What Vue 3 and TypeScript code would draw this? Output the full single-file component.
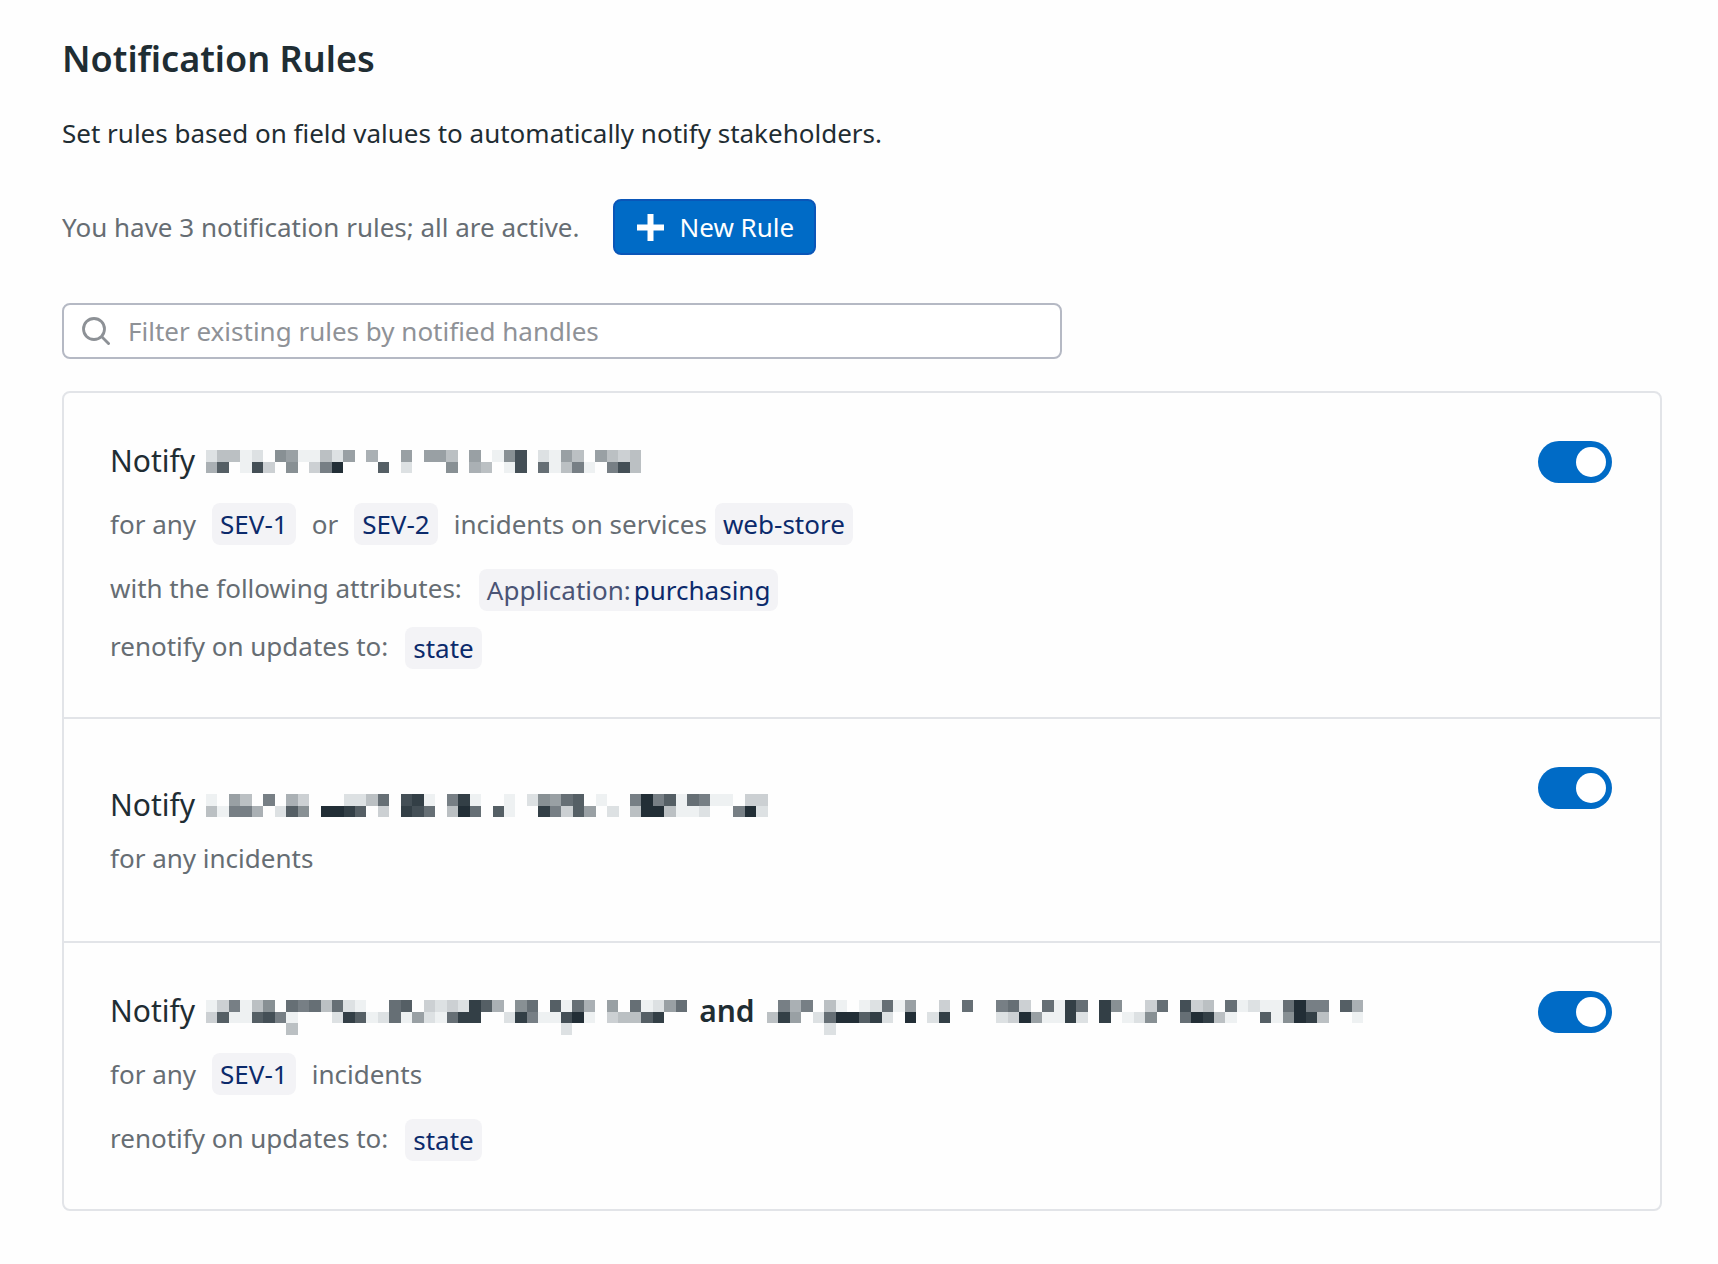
<script setup lang="ts">
import { ref, computed } from 'vue'

interface Handle {
  rows: string[]
}

interface Part {
  kind: 'text' | 'tag'
  value: string
  name?: string
  tight?: boolean
}

interface Line {
  label: boolean
  parts: Part[]
}

interface Rule {
  id: number
  active: boolean
  compact: boolean
  handles: Handle[]
  lines: Line[]
}

const CELL = 11.46

const text = (value: string): Part => ({ kind: 'text', value })
const tag = (value: string, name?: string, tight = false): Part => ({ kind: 'tag', value, name, tight })

const rules = ref<Rule[]>([
  {
    id: 1,
    active: true,
    compact: false,
    handles: [
      {
        rows: [
          'dbbedf89eebd9faff9f99bf9fe84fde9bf9bcb',
          'a5fe4cf8fc72fff5fdfff8fabfe4f6eb7ef74b',
        ],
      },
    ],
    lines: [
      {
        label: false,
        parts: [
          text('for any'),
          tag('SEV-1'),
          text('or'),
          tag('SEV-2'),
          text('incidents on services'),
          tag('web-store', undefined, true),
        ],
      },
      { label: true, parts: [text('with the following attributes:'), tag('purchasing', 'Application:')] },
      { label: true, parts: [text('renotify on updates to:'), tag('state')] },
    ],
  },
  {
    id: 2,
    active: true,
    compact: true,
    handles: [
      {
        rows: [
          'ef9bf7facfffddb6f43ef73effefd8965feff7275e67eefccf',
          'be77afd58f2235fcf346fb26f5eff37c59fdfb22beedff72df',
        ],
      },
    ],
    lines: [{ label: false, parts: [text('for any incidents')] }],
  },
  {
    id: 3,
    active: true,
    compact: false,
    handles: [
      {
        rows: [
          'ec7eb8f676b6deff65fcdcd35af86f5e6af9f6ed96',
          'c5ee547efffd35ed6e9de633ffd37ee42efcbb53ff',
          'fffffffbfffffffffffffffffffffffdffffffffff',
        ],
      },
      {
        rows: [
          'f7a7fbefed6e9ffcf6ff76cf6e36f38ffc6f4cbf6edee6277f5a',
          'b39fd62253df2fd3ffffdc29ee3df3fed8ff623beff5e823bffe',
          'fffffdffffffffffffffffffffffffffffffffffffffffffffff',
        ],
      },
    ],
    lines: [
      { label: false, parts: [text('for any'), tag('SEV-1'), text('incidents')] },
      { label: true, parts: [text('renotify on updates to:'), tag('state')] },
    ],
  },
])

const filter = ref('')

const summary = computed(() => {
  const total = rules.value.length
  const active = rules.value.filter((r) => r.active).length
  return `You have ${total} notification rules; ${active === total ? 'all' : active} are active.`
})

// Darker cells lean towards slate, lighter ones towards plain grey.
function shade(level: string): string {
  const v = parseInt(level, 16) * 17
  const depth = 1 - v / 255
  return `rgb(${v}, ${Math.round(v + 2 + 12 * depth)}, ${Math.round(v + 3 + 20 * depth)})`
}

function cells(handle: Handle) {
  return handle.rows.flatMap((row, y) =>
    [...row].map((level, x) => ({ x, y, level })).filter((c) => c.level !== 'f'),
  )
}
</script>

<template>
  <main class="page">
    <h1 class="title">Notification Rules</h1>
    <p class="intro">Set rules based on field values to automatically notify stakeholders.</p>

    <div class="status">
      <span class="summary">{{ summary }}</span>
      <button type="button" class="new-rule">
        <svg class="plus" viewBox="0 0 27 27" aria-hidden="true">
          <path d="M10.500 0h6v10.500H27v6H16.500V27h-6V16.500H0v-6h10.500z" fill="currentColor" />
        </svg>
        <span>New Rule</span>
      </button>
    </div>

    <label class="filter">
      <svg class="search" viewBox="0 0 28 28" aria-hidden="true">
        <circle cx="12" cy="12" r="10.500" />
        <path d="M19.300 19.300 27.500 27.500" />
      </svg>
      <input
        v-model="filter"
        type="text"
        aria-label="Filter existing rules by notified handles"
        placeholder="Filter existing rules by notified handles"
      />
    </label>

    <ul class="rules">
      <li v-for="rule in rules" :key="rule.id" class="rule" :class="{ compact: rule.compact }">
        <div class="body">
          <div class="notify">
            <span>Notify</span>
            <template v-for="(handle, i) in rule.handles" :key="i">
              <strong v-if="i > 0" class="and">and</strong>
              <svg
                class="handle"
                :viewBox="`0 0 ${handle.rows[0].length} 2`"
                :style="{ width: Math.round(handle.rows[0].length * CELL) + 'px' }"
                preserveAspectRatio="none"
                shape-rendering="crispEdges"
                aria-hidden="true"
              >
                <rect
                  v-for="c in cells(handle)"
                  :key="`${c.x}-${c.y}`"
                  :x="c.x"
                  :y="c.y"
                  width="1"
                  height="1"
                  :fill="shade(c.level)"
                />
              </svg>
            </template>
          </div>
          <div v-for="(line, l) in rule.lines" :key="l" class="line" :class="{ label: line.label }">
            <template v-for="(part, p) in line.parts" :key="p">
              <span v-if="part.kind === 'text'" class="words">{{ part.value }}</span>
              <span v-else class="tag" :class="{ tight: part.tight }"><span v-if="part.name" class="name">{{ part.name }}</span>{{ part.value }}</span>
            </template>
          </div>
        </div>
        <input v-model="rule.active" type="checkbox" role="switch" class="toggle" :aria-label="`Rule ${rule.id} active`" />
      </li>
    </ul>
  </main>
</template>

<style>
body {
  background: #fefefe;
}
</style>

<style scoped>
.page {
  padding: 32px 56px 54px 62px;
  font-family: 'Noto Sans', 'Open Sans', sans-serif;
  font-size: 26px;
  line-height: 42px;
  color: #1f2d33;
}

.title {
  margin: 0;
  font-size: 36px;
  line-height: 54px;
  font-weight: 600;
}

.intro {
  margin: 26px 0 0;
}

.status {
  display: flex;
  align-items: center;
  gap: 33px;
  margin-top: 45px;
}

.summary {
  color: #666d73;
}

.new-rule {
  display: flex;
  align-items: center;
  gap: 16px;
  height: 56px;
  padding: 0 20px 0 22px;
  border: 2px solid #0a56b8;
  border-radius: 8px;
  background: #006bc6;
  color: #fff;
  font: inherit;
}

.plus {
  width: 27px;
  height: 27px;
}

.filter {
  display: flex;
  align-items: center;
  gap: 18px;
  box-sizing: border-box;
  max-width: 1000px;
  height: 56px;
  margin-top: 48px;
  padding: 0 18px;
  border: 2px solid #b5b9c4;
  border-radius: 8px;
  background: #fff;
}

.search {
  flex: none;
  width: 28px;
  height: 28px;
  fill: none;
  stroke: #8d9196;
  stroke-width: 2.8;
}

.filter input {
  flex: 1;
  min-width: 0;
  padding: 0;
  border: 0;
  outline: 0;
  background: none;
  color: inherit;
  font: inherit;
}

.filter input::placeholder {
  color: #8f9297;
  opacity: 1;
}

.rules {
  margin: 32px 0 0;
  padding: 0;
  list-style: none;
  border: 2px solid #e2e4e8;
  border-radius: 8px;
}

.rule {
  display: flex;
  justify-content: space-between;
  align-items: flex-start;
  padding: 48px 48px 48px 46px;
}

.rule + .rule {
  border-top: 2px solid #e2e4e8;
}

.compact .body {
  padding: 18px 0 14px;
}

.notify {
  display: flex;
  align-items: center;
  gap: 11px;
  height: 40px;
  font-size: 30px;
  line-height: 40px;
}

.and {
  margin: 0 1px;
  font-weight: 600;
}

.handle {
  flex: none;
  height: 23px;
  overflow: visible;
}

.line {
  display: flex;
  align-items: center;
  gap: 16px;
  margin-top: 22px;
  color: #666d73;
}

.compact .line {
  margin-top: 12px;
}

.line + .label {
  margin-top: 24px;
}

.label + .label {
  margin-top: 16px;
}

.label {
  gap: 17px;
}

.label .words {
  padding-bottom: 4px;
  line-height: 38px;
}

.tag {
  padding: 0 8px;
  border-radius: 8px;
  background: #f3f3f6;
  color: #0b2a6b;
}

.tight {
  margin-left: -8px;
}

.name {
  margin-right: 3px;
  color: #4a5475;
}

.toggle {
  flex: none;
  display: flex;
  align-items: center;
  justify-content: flex-end;
  appearance: none;
  box-sizing: border-box;
  width: 74px;
  height: 42px;
  margin: 0;
  padding: 6px;
  border-radius: 21px;
  background: #b5b9c4;
}

.toggle::before {
  content: '';
  width: 30px;
  height: 30px;
  border-radius: 50%;
  background: #fff;
}

.toggle:checked {
  background: #006bc6;
}

.toggle:not(:checked) {
  justify-content: flex-start;
}
</style>
